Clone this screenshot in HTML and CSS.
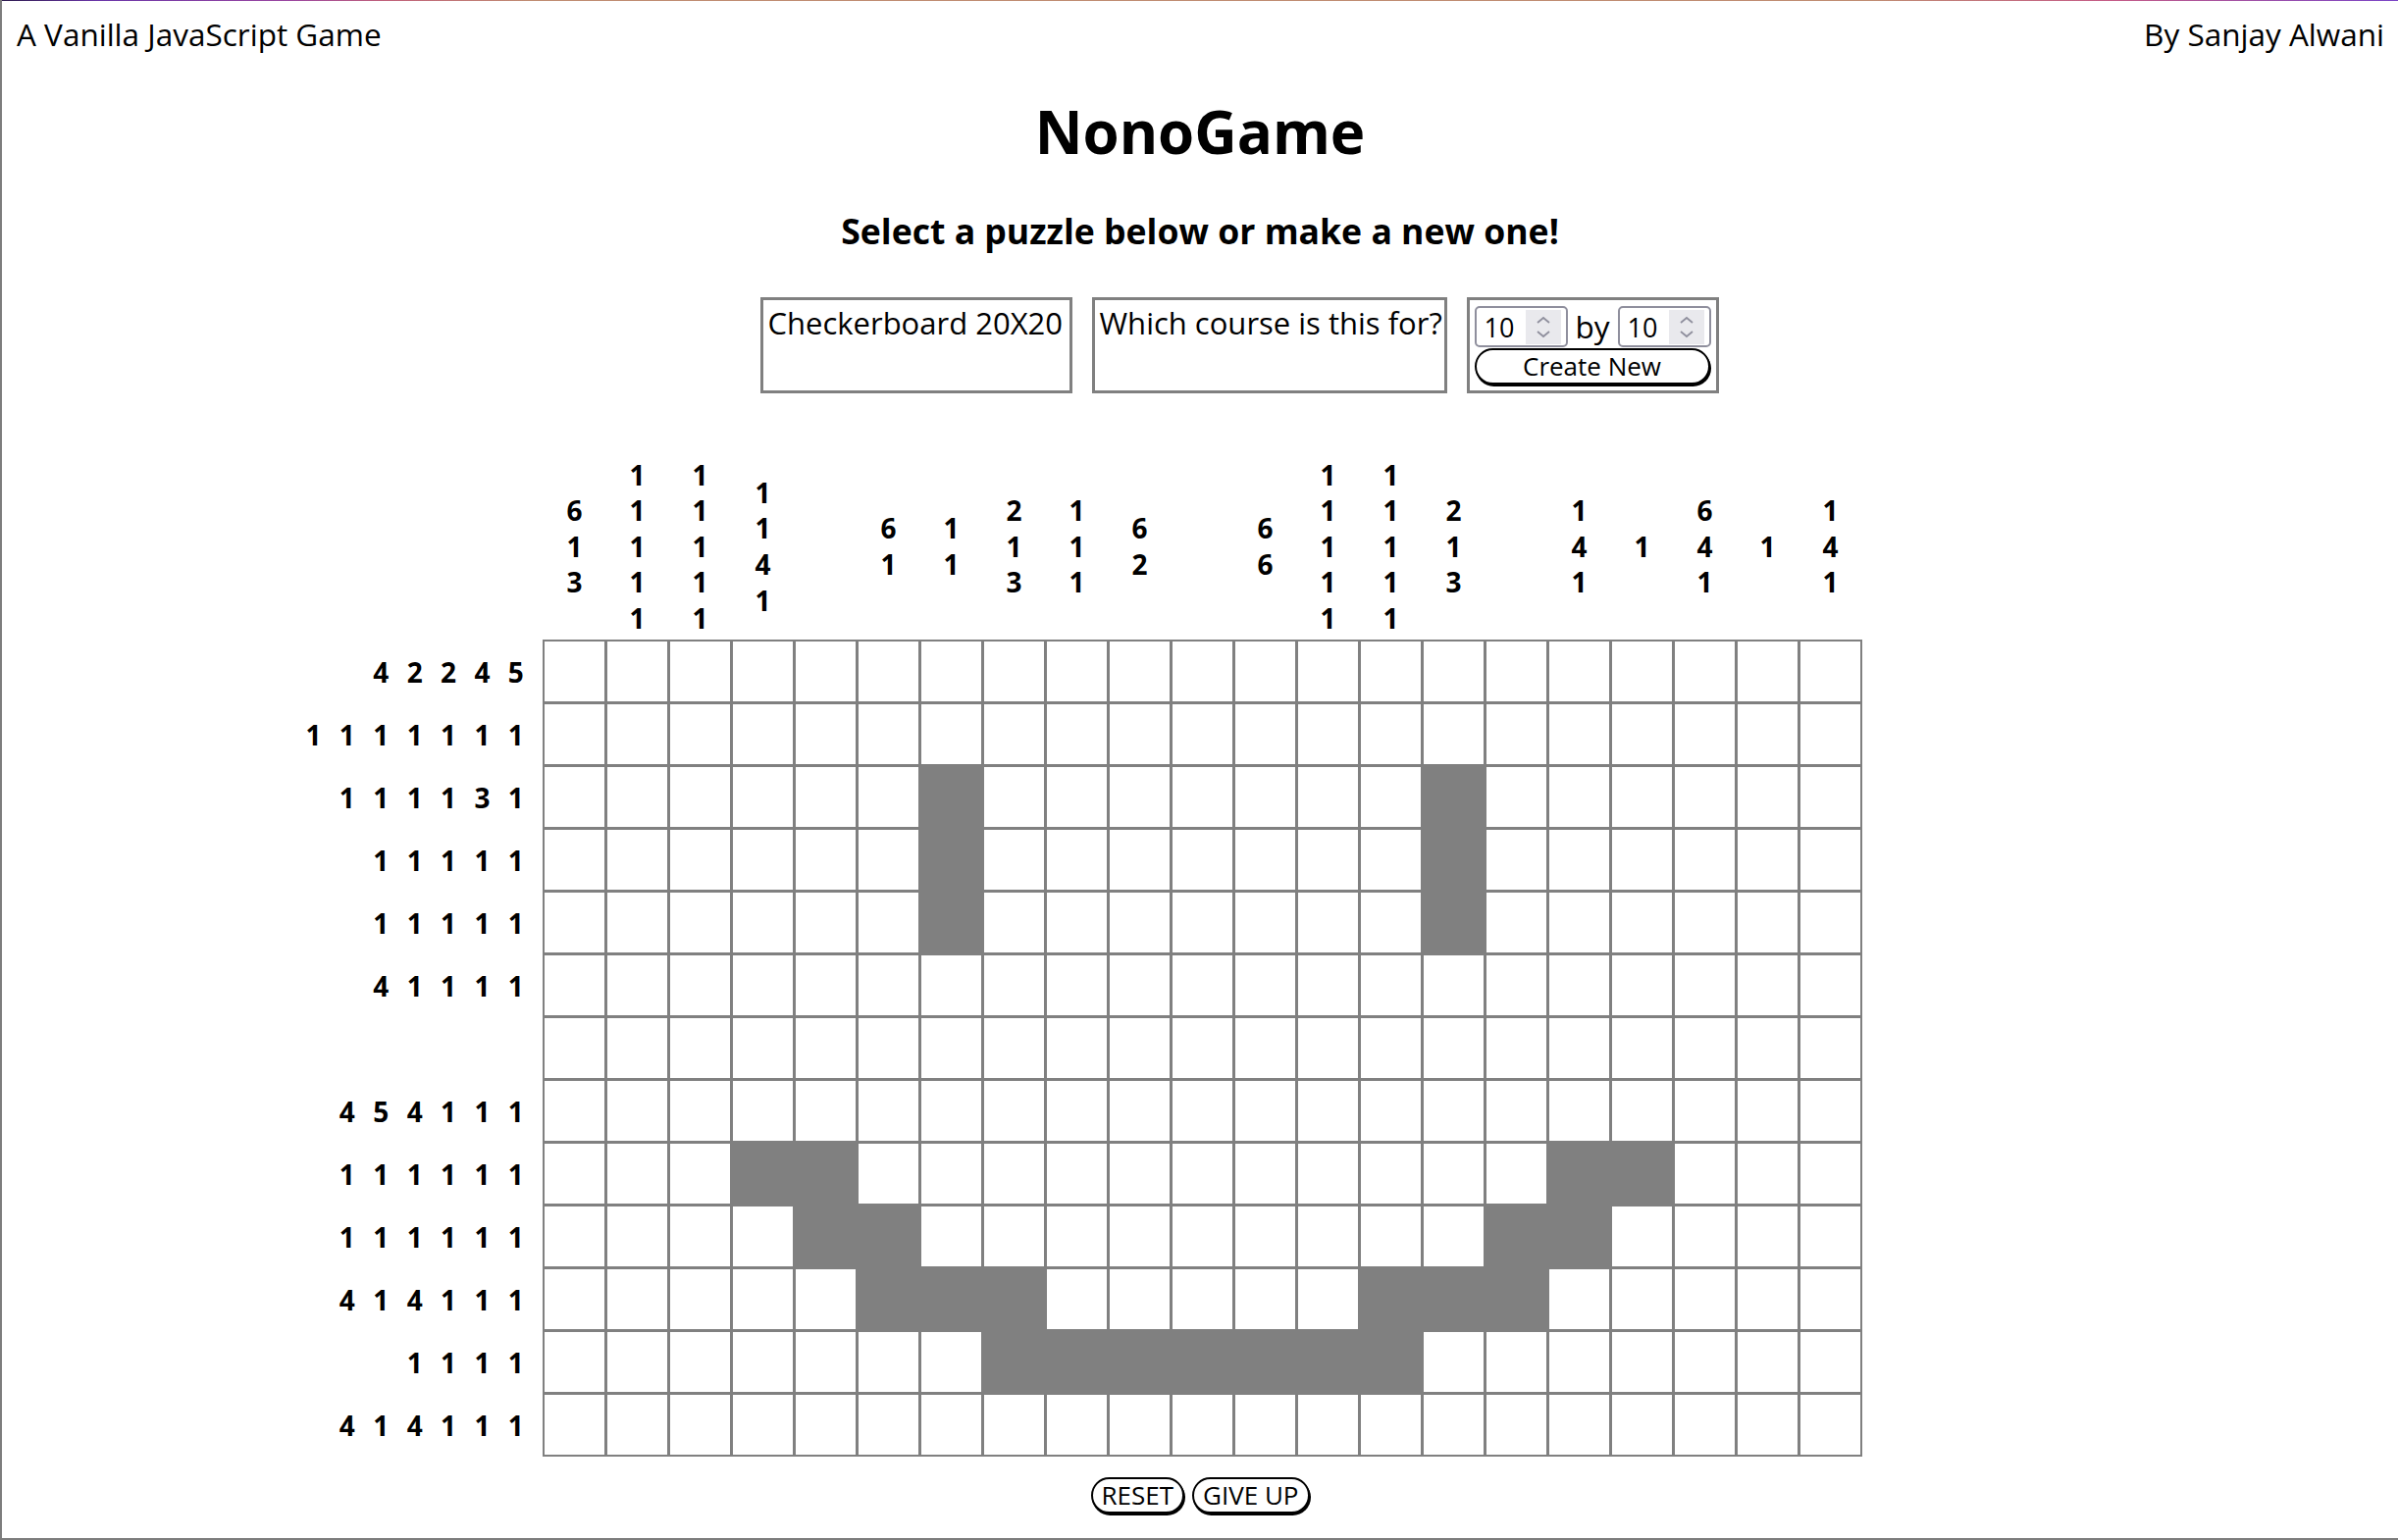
FILE: index.html
```html
<!DOCTYPE html>
<html lang="en">
<head>
<meta charset="utf-8">
<title>NonoGame</title>
<link rel="stylesheet" href="styles.css">
</head>
<body>
<div class="frame">
  <div class="topline"></div>
  <header class="topbar">
    <span>A Vanilla JavaScript Game</span>
    <span>By Sanjay Alwani</span>
  </header>
  <h1 class="title">NonoGame</h1>
  <h3 class="subtitle">Select a puzzle below or make a new one!</h3>
  <div class="puzzles">
    <div class="tile t1">Checkerboard 20X20</div>
    <div class="tile t2">Which course is this for?</div>
    <div class="tile create">
      <div class="dims">
        <label class="num"><input class="numfield" type="text" value="10"><span class="spin"><svg width="36" height="35" viewBox="0 0 36 35"><polyline points="12,13 18,8 24,13" fill="none" stroke="#8f8f9d" stroke-width="1.8"/><polyline points="12,22 18,27 24,22" fill="none" stroke="#8f8f9d" stroke-width="1.8"/></svg></span></label>
        <span class="by">by</span>
        <label class="num"><input class="numfield" type="text" value="10"><span class="spin"><svg width="36" height="35" viewBox="0 0 36 35"><polyline points="12,13 18,8 24,13" fill="none" stroke="#8f8f9d" stroke-width="1.8"/><polyline points="12,22 18,27 24,22" fill="none" stroke="#8f8f9d" stroke-width="1.8"/></svg></span></label>
      </div>
      <button class="pill wide">Create New</button>
    </div>
  </div>

  <div class="board">
    <div class="colclues">
      <div class="cc"><span>6</span><span>1</span><span>3</span></div>
      <div class="cc"><span>1</span><span>1</span><span>1</span><span>1</span><span>1</span></div>
      <div class="cc"><span>1</span><span>1</span><span>1</span><span>1</span><span>1</span></div>
      <div class="cc"><span>1</span><span>1</span><span>4</span><span>1</span></div>
      <div class="cc"></div>
      <div class="cc"><span>6</span><span>1</span></div>
      <div class="cc"><span>1</span><span>1</span></div>
      <div class="cc"><span>2</span><span>1</span><span>3</span></div>
      <div class="cc"><span>1</span><span>1</span><span>1</span></div>
      <div class="cc"><span>6</span><span>2</span></div>
      <div class="cc"></div>
      <div class="cc"><span>6</span><span>6</span></div>
      <div class="cc"><span>1</span><span>1</span><span>1</span><span>1</span><span>1</span></div>
      <div class="cc"><span>1</span><span>1</span><span>1</span><span>1</span><span>1</span></div>
      <div class="cc"><span>2</span><span>1</span><span>3</span></div>
      <div class="cc"></div>
      <div class="cc"><span>1</span><span>4</span><span>1</span></div>
      <div class="cc"><span>1</span></div>
      <div class="cc"><span>6</span><span>4</span><span>1</span></div>
      <div class="cc"><span>1</span></div>
      <div class="cc"><span>1</span><span>4</span><span>1</span></div>
    </div>

    <div class="rowclues">
      <div class="rc"><span>4</span><span>2</span><span>2</span><span>4</span><span>5</span></div>
      <div class="rc"><span>1</span><span>1</span><span>1</span><span>1</span><span>1</span><span>1</span><span>1</span></div>
      <div class="rc"><span>1</span><span>1</span><span>1</span><span>1</span><span>3</span><span>1</span></div>
      <div class="rc"><span>1</span><span>1</span><span>1</span><span>1</span><span>1</span></div>
      <div class="rc"><span>1</span><span>1</span><span>1</span><span>1</span><span>1</span></div>
      <div class="rc"><span>4</span><span>1</span><span>1</span><span>1</span><span>1</span></div>
      <div class="rc"></div>
      <div class="rc"><span>4</span><span>5</span><span>4</span><span>1</span><span>1</span><span>1</span></div>
      <div class="rc"><span>1</span><span>1</span><span>1</span><span>1</span><span>1</span><span>1</span></div>
      <div class="rc"><span>1</span><span>1</span><span>1</span><span>1</span><span>1</span><span>1</span></div>
      <div class="rc"><span>4</span><span>1</span><span>4</span><span>1</span><span>1</span><span>1</span></div>
      <div class="rc"><span>1</span><span>1</span><span>1</span><span>1</span></div>
      <div class="rc"><span>4</span><span>1</span><span>4</span><span>1</span><span>1</span><span>1</span></div>
    </div>

    <div class="cells">
      <i></i><i></i><i></i><i></i><i></i><i></i><i></i><i></i><i></i><i></i><i></i><i></i><i></i><i></i><i></i><i></i><i></i><i></i><i></i><i></i><i></i>
      <i></i><i></i><i></i><i></i><i></i><i></i><i></i><i></i><i></i><i></i><i></i><i></i><i></i><i></i><i></i><i></i><i></i><i></i><i></i><i></i><i></i>
      <i></i><i></i><i></i><i></i><i></i><i></i><i class="on"></i><i></i><i></i><i></i><i></i><i></i><i></i><i></i><i class="on"></i><i></i><i></i><i></i><i></i><i></i><i></i>
      <i></i><i></i><i></i><i></i><i></i><i></i><i class="on"></i><i></i><i></i><i></i><i></i><i></i><i></i><i></i><i class="on"></i><i></i><i></i><i></i><i></i><i></i><i></i>
      <i></i><i></i><i></i><i></i><i></i><i></i><i class="on"></i><i></i><i></i><i></i><i></i><i></i><i></i><i></i><i class="on"></i><i></i><i></i><i></i><i></i><i></i><i></i>
      <i></i><i></i><i></i><i></i><i></i><i></i><i></i><i></i><i></i><i></i><i></i><i></i><i></i><i></i><i></i><i></i><i></i><i></i><i></i><i></i><i></i>
      <i></i><i></i><i></i><i></i><i></i><i></i><i></i><i></i><i></i><i></i><i></i><i></i><i></i><i></i><i></i><i></i><i></i><i></i><i></i><i></i><i></i>
      <i></i><i></i><i></i><i></i><i></i><i></i><i></i><i></i><i></i><i></i><i></i><i></i><i></i><i></i><i></i><i></i><i></i><i></i><i></i><i></i><i></i>
      <i></i><i></i><i></i><i class="on"></i><i class="on"></i><i></i><i></i><i></i><i></i><i></i><i></i><i></i><i></i><i></i><i></i><i></i><i class="on"></i><i class="on"></i><i></i><i></i><i></i>
      <i></i><i></i><i></i><i></i><i class="on"></i><i class="on"></i><i></i><i></i><i></i><i></i><i></i><i></i><i></i><i></i><i></i><i class="on"></i><i class="on"></i><i></i><i></i><i></i><i></i>
      <i></i><i></i><i></i><i></i><i></i><i class="on"></i><i class="on"></i><i class="on"></i><i></i><i></i><i></i><i></i><i></i><i class="on"></i><i class="on"></i><i class="on"></i><i></i><i></i><i></i><i></i><i></i>
      <i></i><i></i><i></i><i></i><i></i><i></i><i></i><i class="on"></i><i class="on"></i><i class="on"></i><i class="on"></i><i class="on"></i><i class="on"></i><i class="on"></i><i></i><i></i><i></i><i></i><i></i><i></i><i></i>
      <i></i><i></i><i></i><i></i><i></i><i></i><i></i><i></i><i></i><i></i><i></i><i></i><i></i><i></i><i></i><i></i><i></i><i></i><i></i><i></i><i></i>
    </div>
  </div>

  <div class="actions">
    <button class="pill">RESET</button>
    <button class="pill">GIVE UP</button>
  </div>
</div>
</body>
</html>
```

FILE: styles.css
```css
* { box-sizing: border-box; }

html, body {
  margin: 0;
  padding: 0;
  background: #fff;
}

body {
  font-family: "Open Sans", "Noto Sans", sans-serif;
  color: #000;
}

.frame {
  height: 1570px;
  overflow: hidden;
  border-left: 2px solid #7d7d7d;
  border-bottom: 2px solid #7d7d7d;
}

.topline {
  height: 1px;
  background: linear-gradient(to right, #2d1b4e 0%, #6a35a8 4%, #9a45a0 12%, #c0607a 16%, #bf8c72 22%, #bf8c72 78%, #c45a86 88%, #7a44c6 100%);
}

.topbar {
  display: flex;
  justify-content: space-between;
  padding: 14px 14px 0 15px;
  font-size: 31.5px;
  line-height: 40px;
}

.title {
  margin: 46px 0 0;
  text-align: center;
  font-size: 60px;
  line-height: 66px;
  font-weight: 700;
}

.subtitle {
  margin: 48px 0 0;
  text-align: center;
  font-size: 35.6px;
  line-height: 40px;
  font-weight: 700;
}

.puzzles {
  display: flex;
  justify-content: center;
  gap: 20px;
  margin-top: 48px;
  padding-left: 80px;
}

.tile {
  height: 98px;
  border: 3px solid #808080;
  padding: 3px 5px 0 5px;
  font-size: 31px;
  line-height: 40px;
  white-space: nowrap;
}

.t1 { width: 318px; }
.t2 { width: 362px; }

.create {
  width: 257px;
  padding: 6px 4px 0 5px;
  display: flex;
  flex-direction: column;
  gap: 1px;
  align-items: flex-start;
}

.dims {
  display: flex;
  align-items: center;
  gap: 8px;
}

.num {
  display: flex;
  align-items: center;
  width: 95px;
  height: 42px;
  border: 2px solid #8f8f9d;
  border-radius: 5px;
  padding: 1px 5px 1px 8px;
  background: #fff;
}

.numfield {
  width: 40px;
  border: 0;
  padding: 0;
  margin: 0;
  outline: none;
  font-family: "Open Sans", "Noto Sans", sans-serif;
  font-size: 27px;
  color: #000;
  background: transparent;
}

.spin {
  margin-left: auto;
  width: 36px;
  height: 35px;
  background: #e9e9ed;
  display: block;
}

.spin svg { display: block; }

.by {
  font-size: 31.5px;
  line-height: 40px;
}

.pill {
  font-family: "Open Sans", "Noto Sans", sans-serif;
  font-size: 26px;
  line-height: 33px;
  height: 37px;
  padding: 0 9px;
  border: 2px solid #000;
  border-radius: 20px;
  background: #fff;
  color: #000;
  box-shadow: 1px 2px 0 #000;
  margin: 0;
}

.wide { width: 240px; }

.board {
  display: grid;
  grid-template-columns: 1fr auto 1fr;
  grid-template-rows: 190px auto;
  margin-top: 61px;
  padding-left: 5px;
}

.colclues {
  grid-column: 2;
  grid-row: 1;
  display: grid;
  grid-template-columns: repeat(21, 61px);
  column-gap: 3px;
  padding: 0 2px;
  align-items: center;
}

.cc {
  display: flex;
  flex-direction: column;
  align-items: center;
  font-weight: 700;
  font-size: 28px;
  line-height: 36.6px;
}

.rowclues {
  grid-column: 1;
  grid-row: 2;
  display: grid;
  grid-template-rows: repeat(13, 61px);
  row-gap: 3px;
  padding: 2px 10px 2px 0;
}

.rc {
  display: flex;
  justify-content: flex-end;
  align-items: center;
  font-weight: 700;
  font-size: 28px;
}

.rc span {
  width: 34.4px;
  text-align: center;
}

.cells {
  grid-column: 2;
  grid-row: 2;
  display: grid;
  grid-template-columns: repeat(21, 61px);
  grid-auto-rows: 61px;
  gap: 3px;
  padding: 2px;
  background: #808080;
}

.cells i { background: #fff; }
.cells i.on { background: #808080; }

.actions {
  display: flex;
  justify-content: center;
  gap: 8px;
  margin-top: 21px;
}
```
